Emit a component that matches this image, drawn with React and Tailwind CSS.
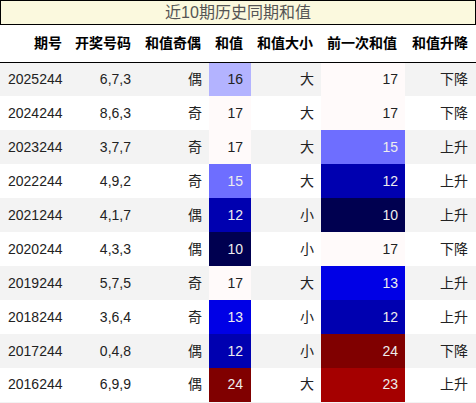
import React from 'react';

const rows = [
  { id: '2025244', nums: '6,7,3', parity: '偶', sum: 16, size: '大', prev: 17, trend: '下降' },
  { id: '2024244', nums: '8,6,3', parity: '奇', sum: 17, size: '大', prev: 17, trend: '下降' },
  { id: '2023244', nums: '3,7,7', parity: '奇', sum: 17, size: '大', prev: 15, trend: '上升' },
  { id: '2022244', nums: '4,9,2', parity: '奇', sum: 15, size: '大', prev: 12, trend: '上升' },
  { id: '2021244', nums: '4,1,7', parity: '偶', sum: 12, size: '小', prev: 10, trend: '上升' },
  { id: '2020244', nums: '4,3,3', parity: '偶', sum: 10, size: '小', prev: 17, trend: '下降' },
  { id: '2019244', nums: '5,7,5', parity: '奇', sum: 17, size: '大', prev: 13, trend: '上升' },
  { id: '2018244', nums: '3,6,4', parity: '奇', sum: 13, size: '小', prev: 12, trend: '上升' },
  { id: '2017244', nums: '0,4,8', parity: '偶', sum: 12, size: '小', prev: 24, trend: '下降' },
  { id: '2016244', nums: '6,9,9', parity: '偶', sum: 24, size: '大', prev: 23, trend: '上升' },
];

// heat colours by value
const heat = {
  10: 'bg-[#000050] text-[#eeeeee]',
  12: 'bg-[#0000b0] text-[#eeeeee]',
  13: 'bg-[#0000e6] text-[#eeeeee]',
  15: 'bg-[#6e6eff] text-[#eeeeee]',
  16: 'bg-[#b3b3ff] text-[#222222]',
  17: 'bg-[#fffafa] text-[#222222]',
  23: 'bg-[#a50000] text-[#eeeeee]',
  24: 'bg-[#800000] text-[#eeeeee]',
};

const headers = ['期号', '开奖号码', '和值奇偶', '和值', '和值大小', '前一次和值', '和值升降'];
const widths = ['w-[70px]', 'w-[69px]', 'w-[70px]', 'w-[42px]', 'w-[70px]', 'w-[84px]', 'w-[71px]'];

export default function App() {
  return (
    <div
      className="w-[476px] h-[403px] bg-white text-[#222222]"
      style={{ fontFamily: '"Liberation Sans", "Noto Sans CJK SC", sans-serif' }}
    >
      <div className="h-[25px] border border-black bg-[#fbf9de] flex items-center justify-center text-[16px] text-[#555555]">
        近10期历史同期和值
      </div>
      <table className="w-[476px] border-collapse table-fixed text-[14px]">
        <colgroup>
          {widths.map((w, i) => (
            <col key={i} className={w} />
          ))}
        </colgroup>
        <thead>
          <tr className="h-[37px] border-b border-black">
            {headers.map(h => (
              <th key={h} className="text-right font-bold pr-[8px] p-0 text-black whitespace-nowrap">
                {h}
              </th>
            ))}
          </tr>
        </thead>
        <tbody className="border-b border-[#f3f3f3]">
          {rows.map((r, i) => (
            <tr key={r.id} className={`h-[34px] ${i % 2 === 0 ? 'bg-[#f3f3f3]' : 'bg-white'}`}>
              <td className="text-left pl-[8px]">{r.id}</td>
              <td className="text-right pr-[8px]">{r.nums}</td>
              <td className="text-right pr-[7px]">{r.parity}</td>
              <td className={`text-right pr-[8px] ${heat[r.sum]}`}>{r.sum}</td>
              <td className="text-right pr-[7px]">{r.size}</td>
              <td className={`text-right pr-[7px] ${heat[r.prev]}`}>{r.prev}</td>
              <td className="text-right pr-[8px]">{r.trend}</td>
            </tr>
          ))}
        </tbody>
      </table>
    </div>
  );
}
